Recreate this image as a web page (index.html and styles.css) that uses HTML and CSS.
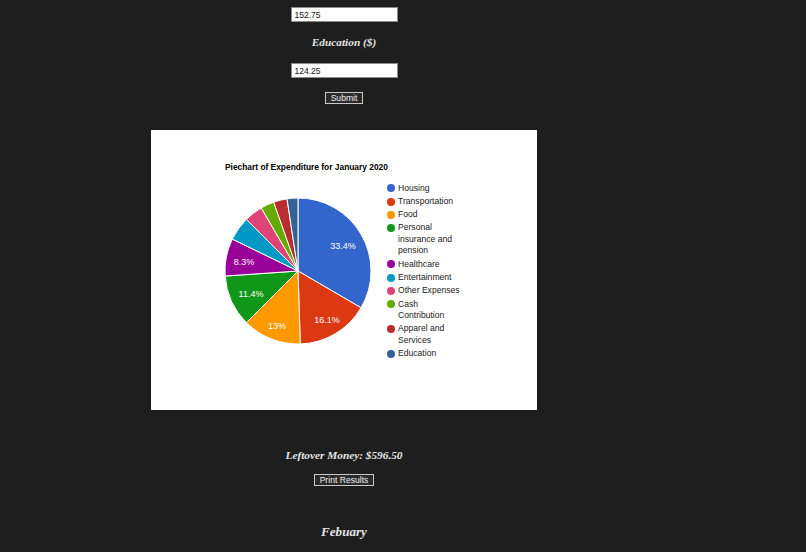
FILE: index.html
```html
<!DOCTYPE html>
<html>
<head>
<meta charset="utf-8">
<link rel="stylesheet" href="styles.css">
</head>
<body>
<main class="page">
  <input class="field field-first" type="text" value="152.75">
  <h3 class="label">Education ($)</h3>
  <input class="field" type="text" value="124.25">
  <button class="btn btn-submit">Submit</button>

  <section class="chart">
    <div class="chart-title">Piechart of Expenditure for January 2020</div>
    <div class="chart-body">
      <svg class="pie" width="150" height="150" viewBox="0 0 150 150">
        <g stroke="#ffffff" stroke-width="1" stroke-linejoin="round">
          <path fill="#3366cc" d="M75,75 L75,2 A73,73 0 0 1 138.07,111.76 Z"/>
          <path fill="#dc3912" d="M75,75 L138.07,111.76 A73,73 0 0 1 77.29,147.96 Z"/>
          <path fill="#ff9900" d="M75,75 L77.29,147.96 A73,73 0 0 1 23.38,126.62 Z"/>
          <path fill="#109618" d="M75,75 L23.38,126.62 A73,73 0 0 1 2.17,80.04 Z"/>
          <path fill="#990099" d="M75,75 L2.17,80.04 A73,73 0 0 1 9.34,43.09 Z"/>
          <path fill="#0099c6" d="M75,75 L9.34,43.09 A73,73 0 0 1 23.38,23.38 Z"/>
          <path fill="#dd4477" d="M75,75 L23.38,23.38 A73,73 0 0 1 38.24,11.93 Z"/>
          <path fill="#66aa00" d="M75,75 L38.24,11.93 A73,73 0 0 1 50.71,6.16 Z"/>
          <path fill="#b82e2e" d="M75,75 L50.71,6.16 A73,73 0 0 1 64.03,2.83 Z"/>
          <path fill="#316395" d="M75,75 L64.03,2.83 A73,73 0 0 1 75,2 Z"/>
        </g>
        <g class="pie-labels" fill="#ffffff" text-anchor="middle">
          <text x="120" y="52.5">33.4%</text>
          <text x="104" y="126.5">16.1%</text>
          <text x="54" y="132.5">13%</text>
          <text x="28" y="100.5">11.4%</text>
          <text x="21" y="68.5">8.3%</text>
        </g>
      </svg>
      <ul class="legend">
        <li class="legend-item"><span class="dot c1"></span><span class="legend-text">Housing</span></li>
        <li class="legend-item"><span class="dot c2"></span><span class="legend-text">Transportation</span></li>
        <li class="legend-item"><span class="dot c3"></span><span class="legend-text">Food</span></li>
        <li class="legend-item"><span class="dot c4"></span><span class="legend-text">Personal insurance and pension</span></li>
        <li class="legend-item"><span class="dot c5"></span><span class="legend-text">Healthcare</span></li>
        <li class="legend-item"><span class="dot c6"></span><span class="legend-text">Entertainment</span></li>
        <li class="legend-item"><span class="dot c7"></span><span class="legend-text">Other Expenses</span></li>
        <li class="legend-item"><span class="dot c8"></span><span class="legend-text">Cash Contribution</span></li>
        <li class="legend-item"><span class="dot c9"></span><span class="legend-text">Apparel and Services</span></li>
        <li class="legend-item"><span class="dot c10"></span><span class="legend-text">Education</span></li>
      </ul>
    </div>
  </section>

  <h3 class="label label-leftover">Leftover Money: $596.50</h3>
  <button class="btn btn-print">Print Results</button>
  <h2 class="month">Febuary</h2>
</main>
</body>
</html>
```

FILE: styles.css
```css
html, body {
  margin: 0;
  padding: 0;
  background: #1e1e1e;
  height: 100%;
  overflow: hidden;
}

.page {
  width: 688px;
  display: flex;
  flex-direction: column;
  align-items: center;
  font-family: "Liberation Sans", Arial, sans-serif;
}

.field {
  box-sizing: border-box;
  width: 107px;
  height: 15px;
  margin: 0;
  padding: 0 3px;
  border: 1px solid #8a8a8a;
  background: #ffffff;
  color: #111111;
  font-family: "Liberation Sans", Arial, sans-serif;
  font-size: 8.5px;
  outline: none;
}

.field-first {
  margin-top: 7px;
}

.label {
  margin: 13.5px 0 14.5px;
  font-family: "Liberation Serif", "Times New Roman", serif;
  font-style: italic;
  font-weight: bold;
  font-size: 11.3px;
  line-height: 13px;
  color: #e4e4e4;
}

.btn {
  box-sizing: border-box;
  height: 12px;
  margin: 0;
  padding: 0 5px;
  border: 1px solid #c8c8c8;
  background: #2a2a2a;
  color: #f0f0f0;
  font-family: "Liberation Sans", Arial, sans-serif;
  font-size: 8.6px;
  line-height: 10px;
}

.btn-submit {
  margin-top: 14px;
}

.chart {
  box-sizing: border-box;
  width: 386px;
  height: 280px;
  margin-top: 26px;
  background: #ffffff;
  padding-top: 31.5px;
}

.chart-title {
  margin-left: 74px;
  font-size: 8.4px;
  font-weight: bold;
  line-height: 11px;
  color: #000000;
}

.chart-body {
  display: flex;
  align-items: flex-start;
  margin-top: 10px;
  padding-left: 72px;
}

.pie {
  display: block;
  margin-top: 13.5px;
}

.pie-labels {
  font-family: "Liberation Sans", Arial, sans-serif;
  font-size: 9px;
}

.legend {
  list-style: none;
  margin: 0 0 0 14px;
  padding: 0;
  display: flex;
  flex-direction: column;
  gap: 1.8px;
}

.legend-item {
  display: flex;
  align-items: flex-start;
  gap: 3px;
}

.dot {
  flex: none;
  width: 8px;
  height: 8px;
  margin-top: 1.75px;
  border-radius: 50%;
}

.c1 { background: #3366cc; }
.c2 { background: #dc3912; }
.c3 { background: #ff9900; }
.c4 { background: #109618; }
.c5 { background: #990099; }
.c6 { background: #0099c6; }
.c7 { background: #dd4477; }
.c8 { background: #66aa00; }
.c9 { background: #b82e2e; }
.c10 { background: #316395; }

.legend-text {
  width: 64px;
  font-size: 8.6px;
  line-height: 11.5px;
  color: #222222;
}

.label-leftover {
  margin: 38.5px 0 12.5px;
}

.btn-print {
  margin-top: 0;
}

.month {
  margin: 37.5px 0 0;
  font-family: "Liberation Serif", "Times New Roman", serif;
  font-style: italic;
  font-weight: bold;
  font-size: 13.1px;
  line-height: 15px;
  color: #e4e4e4;
}
```
